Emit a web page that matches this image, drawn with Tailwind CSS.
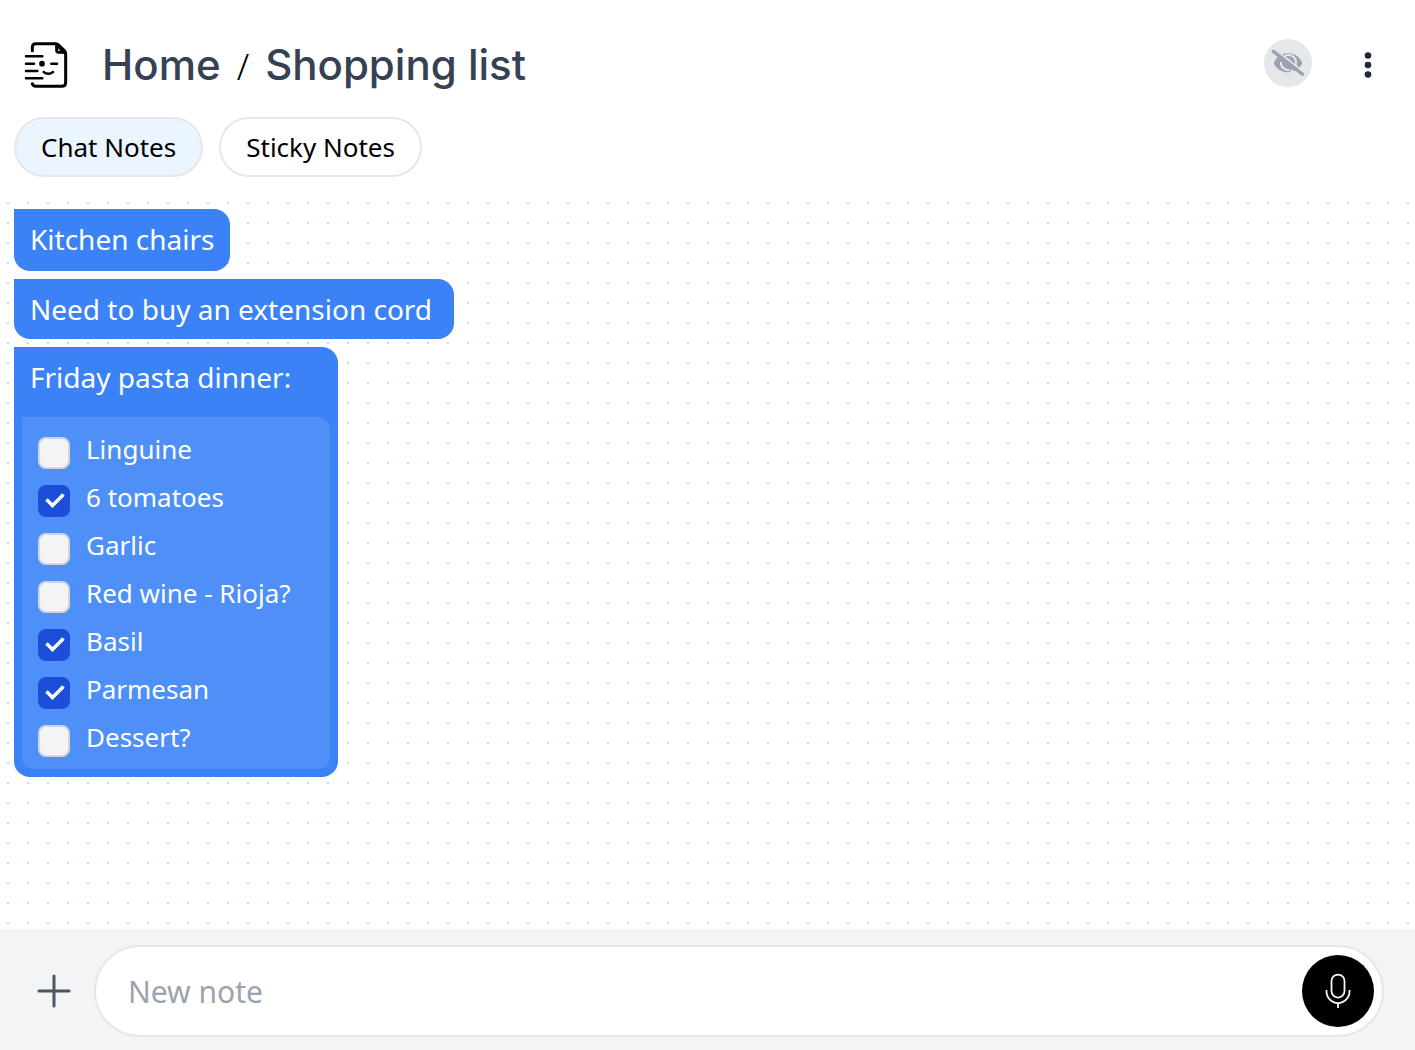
<!DOCTYPE html>
<html lang="en">
<head>
<meta charset="utf-8">
<meta name="viewport" content="width=device-width, initial-scale=1">
<title>Shopping list</title>
<script src="https://cdn.jsdelivr.net/npm/@tailwindcss/browser@4"></script>
</head>
<body class="flex min-h-screen flex-col bg-white font-['Noto_Sans','Open_Sans',sans-serif] text-black">
  <header class="flex items-center pt-9 pr-[23px] pl-4">
    <a href="#" aria-label="Notes home" class="block">
      <svg class="size-15" viewBox="0 0 180 180" fill="none" stroke="#000" stroke-width="9" stroke-linecap="round" stroke-linejoin="round">
        <path d="M49 44V34q0-11 11-11h59q5 0 9 4l17 17q4 4 4 9v86q0 12-12 12H60q-9 0-11-8"/>
        <path d="M122 26v17q0 6 6 6h18" />
        <path d="M122 26l24 24" stroke-width="10"/>
        <path d="M30 61h49M30 83h24M30 105h34M30 127h49M106 83h17M83 108q14 11 28 0" stroke-width="7.500"/>
        <circle cx="78" cy="83" r="8.500" fill="#000" stroke="none"/>
      </svg>
    </a>
    <h1 class="ml-[26px] flex items-center pb-0.5 font-['Inter',sans-serif] text-[42px] leading-[58px] font-medium text-gray-700">
      <a href="#">Home</a>
      <span class="px-4 pt-1 font-['Noto_Sans',sans-serif] text-4xl font-light text-black">/</span>
      <span>Shopping list</span>
    </h1>
    <div class="ml-auto flex items-center gap-8 pb-0.5">
      <button type="button" aria-label="Hidden items" class="mb-1 flex size-12 items-center justify-center rounded-full bg-[#e5e7eb]">
        <svg class="size-12" viewBox="0 0 144 144">
          <path fill="#9ca3af" d="M29 72C37 53 53 43 72 43s35 10 43 29c-8 19-24 28-43 28S37 91 29 72Z"/>
          <path d="M60 53A22 22 0 0 1 91 84M51 69A22 22 0 0 0 76 93" fill="none" stroke="#e5e7eb" stroke-width="6"/>
          <path d="M68 61q8-1 11 8" fill="none" stroke="#e5e7eb" stroke-width="4" stroke-linecap="round"/>
          <path fill="#e5e7eb" d="M80 91l28 13H78Z"/>
          <path d="M34 33l91 70" stroke="#e5e7eb" stroke-width="5"/>
          <path d="M28 37l88 69" stroke="#9ca3af" stroke-width="10" stroke-linecap="round"/>
        </svg>
      </button>
      <button type="button" aria-label="More options" class="flex size-12 items-center justify-center">
        <svg class="h-7 w-2" viewBox="0 0 8 28" fill="#1f2937"><circle cx="4" cy="4.500" r="3.300"/><circle cx="4" cy="14" r="3.300"/><circle cx="4" cy="23.500" r="3.300"/></svg>
      </button>
    </div>
  </header>

  <nav class="flex gap-4 px-3.5 pt-[21px] pb-4">
    <button type="button" class="h-15 rounded-full border-2 border-[#e5e7eb] bg-[#eaf5ff] px-[25px] text-[26px]">Chat Notes</button>
    <button type="button" class="h-15 rounded-full border-2 border-[#e5e7eb] bg-white px-[25px] text-[26px]">Sticky Notes</button>
  </nav>

  <main class="flex grow flex-col items-start gap-2 bg-[conic-gradient(from_270deg_at_2px_2px,#bfdbfe_90deg,transparent_90deg)] bg-[length:20px_20px] bg-[position:7px_9px] px-3.5 pt-4 pb-8 text-[28px] leading-9 text-white">
    <p class="rounded-2xl rounded-tl-none bg-[#3b82f6] px-4 pt-3 pb-3.5">Kitchen chairs</p>
    <p class="min-w-[440px] rounded-2xl rounded-tl-none bg-[#3b82f6] px-4 py-3">Need to buy an extension cord</p>
    <section class="rounded-2xl rounded-tl-none bg-[#3b82f6] px-2 pt-3 pb-2">
      <h2 class="px-2 pb-[22px]">Friday pasta dinner:</h2>
      <ul class="rounded-xl rounded-tl-none bg-[#4f8ff8] py-2 pr-[39px] pl-4 text-[26px] leading-12">
        <li><label class="flex h-12 gap-4"><span class="grid pt-3"><input type="checkbox" class="peer col-start-1 row-start-1 size-8 appearance-none rounded-lg border-2 border-gray-300 bg-gray-100 checked:border-[#1d4ed8] checked:bg-[#1d4ed8]"><svg class="pointer-events-none invisible col-start-1 row-start-1 size-8 peer-checked:visible" viewBox="0 0 32 32" fill="none" stroke="#fff" stroke-width="3.500"><path d="M8.500 14.500l6 6L25.500 9.500"/></svg></span>Linguine</label></li>
        <li><label class="flex h-12 gap-4"><span class="grid pt-3"><input type="checkbox" checked class="peer col-start-1 row-start-1 size-8 appearance-none rounded-lg border-2 border-gray-300 bg-gray-100 checked:border-[#1d4ed8] checked:bg-[#1d4ed8]"><svg class="pointer-events-none invisible col-start-1 row-start-1 size-8 peer-checked:visible" viewBox="0 0 32 32" fill="none" stroke="#fff" stroke-width="3.500"><path d="M8.500 14.500l6 6L25.500 9.500"/></svg></span>6 tomatoes</label></li>
        <li><label class="flex h-12 gap-4"><span class="grid pt-3"><input type="checkbox" class="peer col-start-1 row-start-1 size-8 appearance-none rounded-lg border-2 border-gray-300 bg-gray-100 checked:border-[#1d4ed8] checked:bg-[#1d4ed8]"><svg class="pointer-events-none invisible col-start-1 row-start-1 size-8 peer-checked:visible" viewBox="0 0 32 32" fill="none" stroke="#fff" stroke-width="3.500"><path d="M8.500 14.500l6 6L25.500 9.500"/></svg></span>Garlic</label></li>
        <li><label class="flex h-12 gap-4"><span class="grid pt-3"><input type="checkbox" class="peer col-start-1 row-start-1 size-8 appearance-none rounded-lg border-2 border-gray-300 bg-gray-100 checked:border-[#1d4ed8] checked:bg-[#1d4ed8]"><svg class="pointer-events-none invisible col-start-1 row-start-1 size-8 peer-checked:visible" viewBox="0 0 32 32" fill="none" stroke="#fff" stroke-width="3.500"><path d="M8.500 14.500l6 6L25.500 9.500"/></svg></span>Red wine - Rioja?</label></li>
        <li><label class="flex h-12 gap-4"><span class="grid pt-3"><input type="checkbox" checked class="peer col-start-1 row-start-1 size-8 appearance-none rounded-lg border-2 border-gray-300 bg-gray-100 checked:border-[#1d4ed8] checked:bg-[#1d4ed8]"><svg class="pointer-events-none invisible col-start-1 row-start-1 size-8 peer-checked:visible" viewBox="0 0 32 32" fill="none" stroke="#fff" stroke-width="3.500"><path d="M8.500 14.500l6 6L25.500 9.500"/></svg></span>Basil</label></li>
        <li><label class="flex h-12 gap-4"><span class="grid pt-3"><input type="checkbox" checked class="peer col-start-1 row-start-1 size-8 appearance-none rounded-lg border-2 border-gray-300 bg-gray-100 checked:border-[#1d4ed8] checked:bg-[#1d4ed8]"><svg class="pointer-events-none invisible col-start-1 row-start-1 size-8 peer-checked:visible" viewBox="0 0 32 32" fill="none" stroke="#fff" stroke-width="3.500"><path d="M8.500 14.500l6 6L25.500 9.500"/></svg></span>Parmesan</label></li>
        <li><label class="flex h-12 gap-4"><span class="grid pt-3"><input type="checkbox" class="peer col-start-1 row-start-1 size-8 appearance-none rounded-lg border-2 border-gray-300 bg-gray-100 checked:border-[#1d4ed8] checked:bg-[#1d4ed8]"><svg class="pointer-events-none invisible col-start-1 row-start-1 size-8 peer-checked:visible" viewBox="0 0 32 32" fill="none" stroke="#fff" stroke-width="3.500"><path d="M8.500 14.500l6 6L25.500 9.500"/></svg></span>Dessert?</label></li>
      </ul>
    </section>
  </main>

  <form class="flex items-center gap-4 bg-gray-100 pt-4 pr-[31px] pb-[13px] pl-[30px]">
    <button type="button" aria-label="Add attachment" class="flex size-12 items-center justify-center">
      <svg class="size-9" viewBox="0 0 36 36" stroke="#4b5563" stroke-width="3" stroke-linecap="round"><path d="M18 3v30M3 18h30"/></svg>
    </button>
    <div class="flex grow items-center rounded-full border-2 border-[#e5e7eb] bg-white py-2 pr-2 pl-8">
      <input type="text" aria-label="New note" placeholder="New note" class="h-18 min-w-0 grow bg-transparent text-3xl text-black outline-none placeholder:text-[#9ca3af]">
      <button type="button" aria-label="Record voice note" class="flex size-18 items-center justify-center rounded-full bg-black">
        <svg class="size-9" viewBox="0 0 36 36" fill="none" stroke="#fff" stroke-width="1.750"><rect x="11.500" y="1.500" width="13" height="23" rx="6.500"/><path d="M6.500 17v1.500a11.500 11.500 0 0 0 23 0V17M18 30v5"/></svg>
      </button>
    </div>
  </form>
</body>
</html>
